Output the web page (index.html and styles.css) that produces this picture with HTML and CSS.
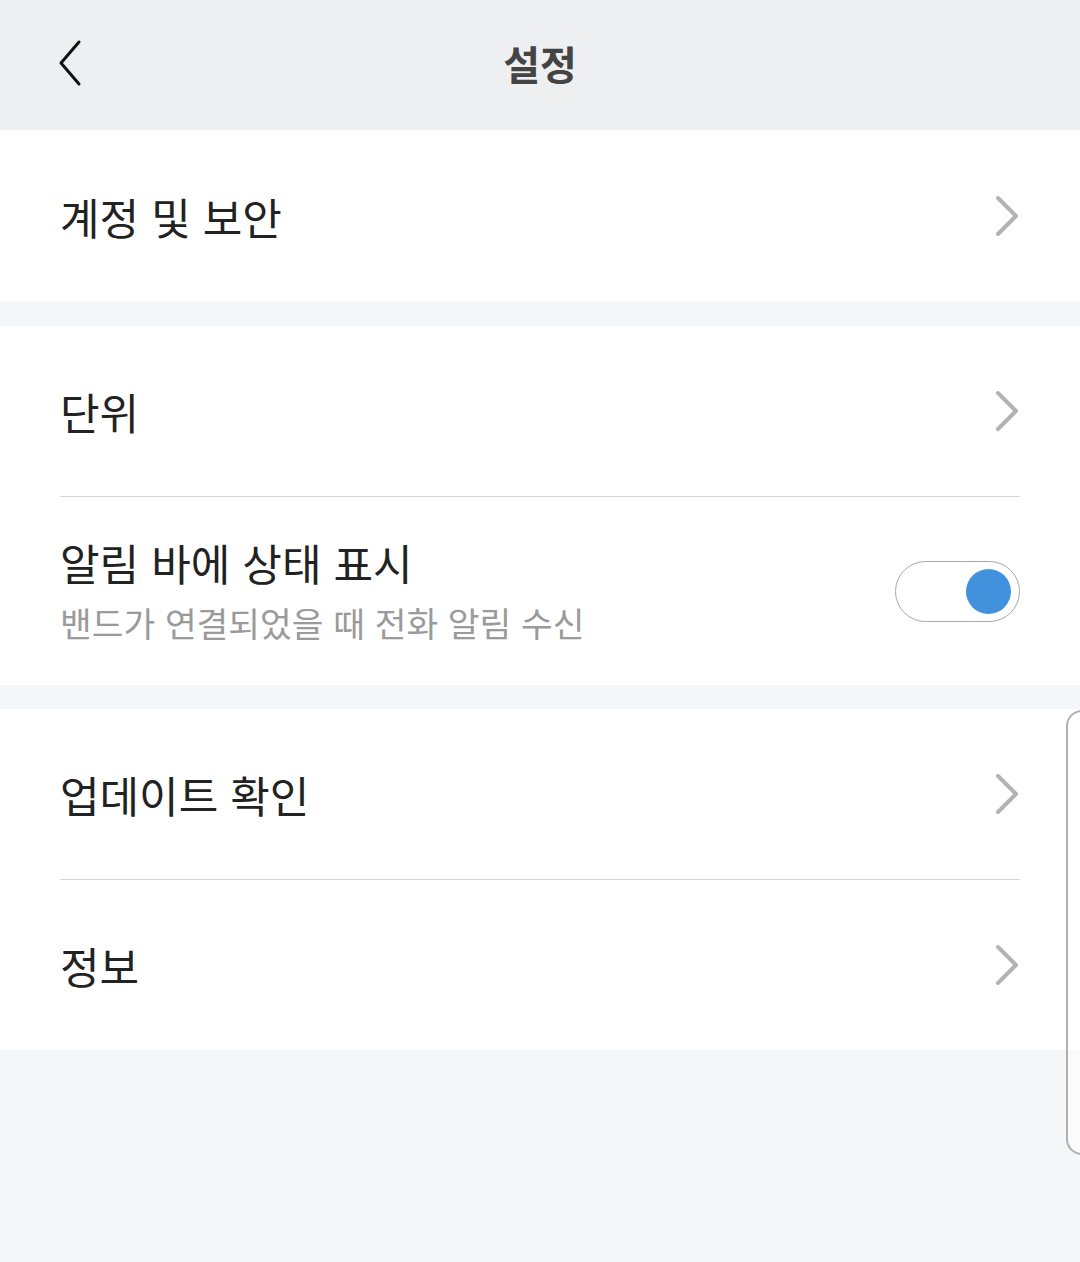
FILE: index.html
```html
<!DOCTYPE html>
<html lang="ko">

<head>
  <meta charset="UTF-8">
  <title>설정</title>
  <link rel="stylesheet" href="styles.css">
</head>

<body>
  <header class="topbar">
    <button class="back" aria-label="뒤로">
      <svg width="26" height="48" viewBox="0 0 26 48">
        <path d="M22 3 L4 24 L22 45" fill="none" stroke="#111" stroke-width="3" stroke-linecap="round" stroke-linejoin="round"/>
      </svg>
    </button>
    <h1 class="title">설정</h1>
    <span></span>
  </header>

  <section class="group">
    <div class="row first">
      <span class="label">계정 및 보안</span>
      <svg class="chev" width="26" height="42" viewBox="0 0 26 42">
        <path d="M4 3 L22 21 L4 39" fill="none" stroke="#b3b3b3" stroke-width="4" stroke-linecap="round" stroke-linejoin="round"/>
      </svg>
    </div>
  </section>

  <section class="group">
    <div class="row">
      <span class="label">단위</span>
      <svg class="chev" width="26" height="42" viewBox="0 0 26 42">
        <path d="M4 3 L22 21 L4 39" fill="none" stroke="#b3b3b3" stroke-width="4" stroke-linecap="round" stroke-linejoin="round"/>
      </svg>
    </div>
    <div class="row tall">
      <div class="text">
        <span class="label">알림 바에 상태 표시</span>
        <span class="sub">밴드가 연결되었을 때 전화 알림 수신</span>
      </div>
      <span class="switch on"><span class="knob"></span></span>
    </div>
  </section>

  <section class="group">
    <div class="row">
      <span class="label">업데이트 확인</span>
      <svg class="chev" width="26" height="42" viewBox="0 0 26 42">
        <path d="M4 3 L22 21 L4 39" fill="none" stroke="#b3b3b3" stroke-width="4" stroke-linecap="round" stroke-linejoin="round"/>
      </svg>
    </div>
    <div class="row">
      <span class="label">정보</span>
      <svg class="chev" width="26" height="42" viewBox="0 0 26 42">
        <path d="M4 3 L22 21 L4 39" fill="none" stroke="#b3b3b3" stroke-width="4" stroke-linecap="round" stroke-linejoin="round"/>
      </svg>
    </div>
  </section>

  <div class="edge-handle"></div>
</body>

</html>
```

FILE: styles.css
```css
body {
  margin: 0;
  font-family: "Noto Sans CJK KR", "Noto Sans", sans-serif;
  background: #f5f6f8;
  color: #222;
  min-height: 1262px;
}

.topbar {
  height: 130px;
  background: #eeeff1;
  display: grid;
  grid-template-columns: 200px 1fr 200px;
  align-items: center;
}

.back {
  border: none;
  background: none;
  padding: 0;
  margin-left: 57px;
  width: 30px;
  height: 50px;
  display: flex;
  align-items: center;
  margin-top: -4px;
}

.title {
  margin: 0;
  text-align: center;
  font-size: 40px;
  font-weight: bold;
  color: #444;
  margin-top: -4px;
}

.group {
  background: #fff;
  margin-bottom: 24px;
}

.row {
  height: 170px;
  margin: 0 60px;
  display: flex;
  align-items: center;
  justify-content: space-between;
}

.row.first {
  height: 172px;
}

.row + .row {
  border-top: 1px solid #d4d4d4;
}

.row.tall {
  height: 188px;
}

.label {
  font-size: 43px;
  color: #222;
}

.text {
  display: flex;
  flex-direction: column;
  margin-top: -4px;
}

.sub {
  font-size: 34.5px;
  color: #9a9a9a;
  margin-top: 4px;
}

.switch {
  width: 115px;
  height: 59px;
  border: 1.5px solid #a8a8a8;
  border-radius: 32px;
  display: flex;
  align-items: center;
  justify-content: flex-end;
  padding-right: 8px;
  box-sizing: content-box;
}

.knob {
  width: 45px;
  height: 45px;
  border-radius: 50%;
  background: #4191dd;
}

.edge-handle {
  position: absolute;
  left: 1066px;
  top: 710px;
  width: 30px;
  height: 441px;
  border: 2px solid #b0b0b0;
  border-right: none;
  border-radius: 16px 0 0 16px;
  background: rgba(255, 255, 255, 0.6);
}
```
